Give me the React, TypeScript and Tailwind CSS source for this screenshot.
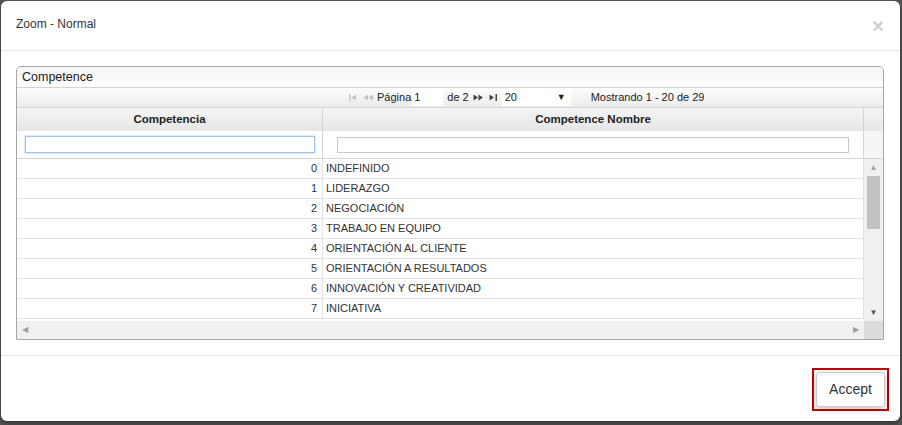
import React from 'react';

const rows = [
  { id: 0, name: 'INDEFINIDO' },
  { id: 1, name: 'LIDERAZGO' },
  { id: 2, name: 'NEGOCIACIÓN' },
  { id: 3, name: 'TRABAJO EN EQUIPO' },
  { id: 4, name: 'ORIENTACIÓN AL CLIENTE' },
  { id: 5, name: 'ORIENTACIÓN A RESULTADOS' },
  { id: 6, name: 'INNOVACIÓN Y CREATIVIDAD' },
  { id: 7, name: 'INICIATIVA' },
];

const font = "font-['Liberation_Sans',Arial,sans-serif]";

// small pager arrows, drawn like the jqGrid sprites
const FirstIcon = ({ color }: { color: string }) => (
  <svg width="9" height="7" viewBox="0 0 9 7">
    <rect x="0" y="0" width="1.5" height="7" fill={color} />
    <path d="M2.5 3.5 L7 0.5 L7 6.5 Z" fill={color} />
  </svg>
);

const PrevIcon = ({ color }: { color: string }) => (
  <svg width="11" height="7" viewBox="0 0 11 7">
    <path d="M0.5 3.5 L5 0.5 L5 6.5 Z M5.5 3.5 L10 0.5 L10 6.5 Z" fill={color} />
  </svg>
);

const NextIcon = ({ color }: { color: string }) => (
  <svg width="11" height="7" viewBox="0 0 11 7">
    <path d="M0.5 0.5 L5 3.5 L0.5 6.5 Z M5.5 0.5 L10 3.5 L5.5 6.5 Z" fill={color} />
  </svg>
);

const LastIcon = ({ color }: { color: string }) => (
  <svg width="9" height="7" viewBox="0 0 9 7">
    <path d="M0.5 0.5 L5 3.5 L0.5 6.5 Z" fill={color} />
    <rect x="6.5" y="0" width="1.5" height="7" fill={color} />
  </svg>
);

const Pager = () => (
  <div className="h-[21px] flex items-center border-y border-[#d3d3d3] bg-gradient-to-b from-[#fdfdfd] to-[#ececec] text-[11px] text-[#222]">
    <div className="w-[332px]" />
    <FirstIcon color="#c4c4c4" />
    <div className="ml-[5px]">
      <PrevIcon color="#c4c4c4" />
    </div>
    <span className="ml-[3px]">Página</span>
    <div className="ml-[1px] w-[31px] h-[17px] bg-white flex items-center pl-[2px]">1</div>
    <span className="ml-[4px]">de 2</span>
    <div className="ml-[4px]">
      <NextIcon color="#444" />
    </div>
    <div className="ml-[5px]">
      <LastIcon color="#444" />
    </div>
    <div className="ml-[4px] w-[69px] h-[17px] bg-white flex items-center pl-[3px] justify-between pr-[5px]">
      <span>20</span>
      <span className="text-[9px]">▼</span>
    </div>
    <span className="ml-[20px]">Mostrando 1 - 20 de 29</span>
  </div>
);

const App = () => {
  return (
    <div className={`w-[902px] h-[425px] bg-[#565656] pt-px pl-px ${font}`}>
      <div className="w-[899px] h-[420px] bg-white rounded-[6px] flex flex-col shadow-[0_3px_6px_rgba(0,0,0,0.4)]">
        <div className="h-[50px] border-b border-[#e5e5e5] flex items-start justify-between pl-[15px] pr-[16px] pt-[14px]">
          <span className="text-[12px] text-[#333]">Zoom - Normal</span>
          <span className="text-[20px] leading-[16px] font-bold text-[#d0d0d0] mt-[3px]">×</span>
        </div>

        <div className="px-[15px] pt-[15px] pb-[15px] border-b border-[#e5e5e5]">
          <div className="border border-[#a6a6a6] rounded-t-[5px] overflow-hidden w-[868px]">
            <div className="h-[20px] flex items-center pl-[5px] text-[12.5px] text-[#222] bg-gradient-to-b from-[#f6f6f6] to-[#fdfdfd]">
              Competence
            </div>
            <Pager />

            <div className="flex h-[23px] bg-gradient-to-b from-[#f5f5f5] to-[#e6e6e6] text-[11.5px] font-bold text-[#222]">
              <div className="w-[306px] border-r border-[#d3d3d3] flex items-center justify-center">Competencia</div>
              <div className="w-[541px] border-r border-[#d3d3d3] flex items-center justify-center">Competence Nombre</div>
              <div className="flex-1" />
            </div>

            <div className="flex h-[28px] border-b border-[#d3d3d3] bg-[#f5f5f5]">
              <div className="w-[306px] border-r border-[#d3d3d3] bg-white flex items-center pl-[8px]">
                <div className="w-[290px] h-[17px] border border-[#9cc4e6] shadow-[0_0_2px_#9cc4e6]" />
              </div>
              <div className="w-[541px] border-r border-[#d3d3d3] bg-white flex items-center pl-[14px]">
                <div className="w-[512px] h-[16px] border border-[#c8c8c8]" />
              </div>
              <div className="flex-1" />
            </div>

            <div className="flex h-[162px]">
              <div className="w-[847px] overflow-hidden">
                {rows.map((r) => (
                  <div key={r.id} className="flex h-[20px] border-b border-[#e2e2e2] text-[11px] text-[#333]">
                    <div className="w-[306px] border-r border-[#e2e2e2] flex items-center justify-end pr-[5px]">{r.id}</div>
                    <div className="w-[541px] border-r border-[#e2e2e2] flex items-center pl-[3px]">{r.name}</div>
                  </div>
                ))}
              </div>
              <div className="w-[19px] bg-[#f0f0f0] flex flex-col items-center">
                <span className="text-[8px] text-[#a0a0a0] leading-[8px] mt-[5px]">▲</span>
                <div className="w-[13px] h-[53px] bg-[#c1c1c1] mt-[4px]" />
                <div className="flex-1" />
                <span className="text-[8px] text-[#505050] leading-[8px] mb-[4px]">▼</span>
              </div>
            </div>

            <div className="flex h-[18px]">
              <div className="w-[847px] bg-[#f0f0f0] flex items-center justify-between px-[5px] text-[8px]">
                <span className="text-[#a0a0a0]">◀</span>
                <span className="text-[#a0a0a0]">▶</span>
              </div>
              <div className="flex-1 bg-[#dcdcdc]" />
            </div>
          </div>
        </div>

        <div className="flex justify-end pr-[11px] pt-[12px]">
          <div className="border-2 border-[#c00000] p-[2px]">
            <button className="w-[69px] h-[35px] bg-white border border-[#ccc] rounded-[3px] text-[14px] text-[#333] shadow-[0_2px_6px_rgba(0,0,0,0.25)]">
              Accept
            </button>
          </div>
        </div>
      </div>
    </div>
  );
};

export default App;
